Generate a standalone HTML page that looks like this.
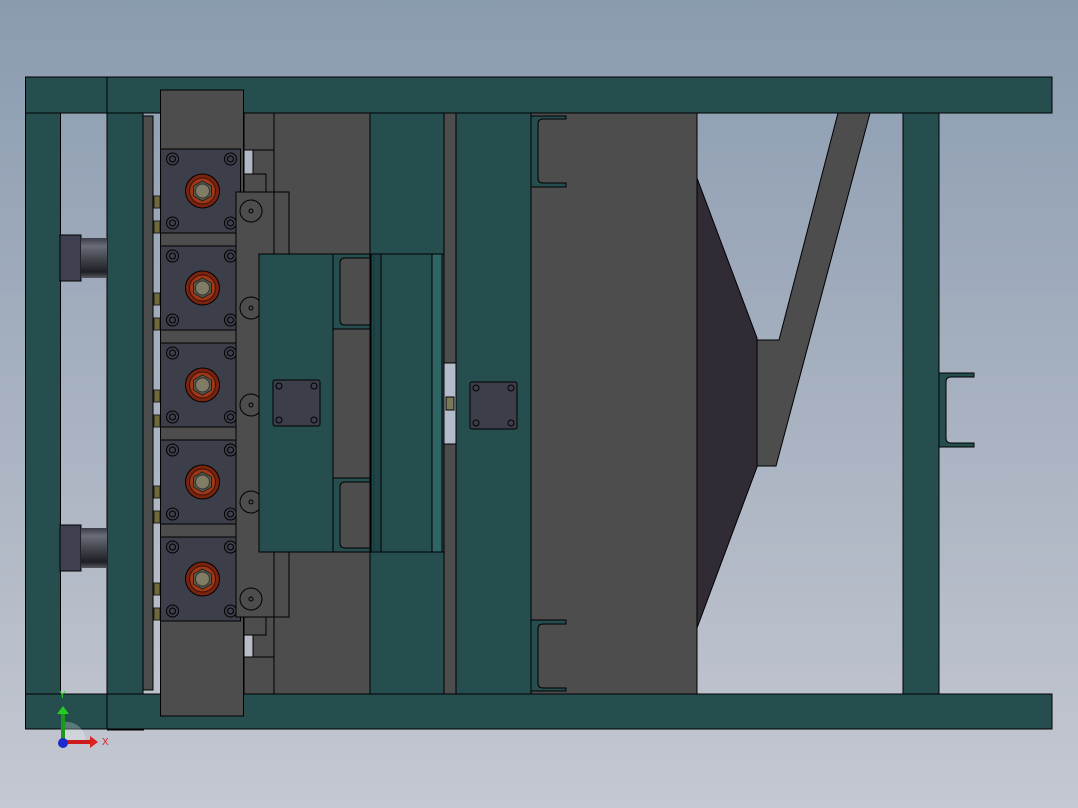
<!DOCTYPE html>
<html><head><meta charset="utf-8"><style>
html,body{margin:0;padding:0;width:1078px;height:808px;overflow:hidden;background:linear-gradient(#8a9bb0,#c4c7d0);}
svg{display:block}
</style></head><body>
<svg width="1078" height="808" viewBox="0 0 1078 808" xmlns="http://www.w3.org/2000/svg">
<defs>
<linearGradient id="bg" x1="0" y1="0" x2="0" y2="1"><stop offset="0" stop-color="#8a9bb0"/><stop offset="1" stop-color="#c5c8d1"/></linearGradient>
<linearGradient id="cyl" x1="0" y1="0" x2="0" y2="1"><stop offset="0" stop-color="#3a3c48"/><stop offset="0.2" stop-color="#6a6c78"/><stop offset="0.5" stop-color="#45474f"/><stop offset="0.85" stop-color="#1e1f25"/><stop offset="1" stop-color="#55575f"/></linearGradient>
<g id="motor">
<rect x="0" y="0" width="80" height="84" fill="#3c3e4a" stroke="#000" stroke-width="1"/>
<circle cx="12" cy="10" r="6" fill="none" stroke="#000"/><circle cx="12" cy="10" r="3" fill="none" stroke="#000"/>
<circle cx="70" cy="10" r="6" fill="none" stroke="#000"/><circle cx="70" cy="10" r="3" fill="none" stroke="#000"/>
<circle cx="12" cy="74" r="6" fill="none" stroke="#000"/><circle cx="12" cy="74" r="3" fill="none" stroke="#000"/>
<circle cx="70" cy="74" r="6" fill="none" stroke="#000"/><circle cx="70" cy="74" r="3" fill="none" stroke="#000"/>
<circle cx="42" cy="42" r="17" fill="#7a2410" stroke="#000"/>
<circle cx="42" cy="42" r="13" fill="#a03818" stroke="#3a1006"/>
<polygon points="42,32 51,37 51,47 42,52 33,47 33,37" fill="#5a5a48" stroke="#222"/>
<circle cx="42" cy="42" r="7" fill="#807c66" stroke="#333"/>
</g>
</defs>
<rect width="1078" height="808" fill="url(#bg)"/>
<g stroke="#000" stroke-width="1">
<!-- posts -->
<rect x="25.5" y="113" width="35" height="581" fill="#264e4f"/>
<rect x="107" y="113" width="36" height="581" fill="#264e4f"/>
<rect x="143" y="116" width="10" height="574" fill="#4d4d4d"/>
<!-- cylinders -->
<rect x="60" y="235" width="21" height="46" fill="#3e4050"/>
<rect x="81" y="238" width="26" height="40" fill="url(#cyl)" stroke="none"/>
<rect x="60" y="525" width="21" height="46" fill="#3e4050"/>
<rect x="81" y="528" width="26" height="40" fill="url(#cyl)" stroke="none"/>
<!-- mid gray -->
<rect x="244" y="113" width="126" height="581" fill="#4d4d4d"/>
<rect x="274" y="113" width="96" height="581" fill="#4d4d4d"/>
<rect x="244" y="113" width="30" height="37" fill="#4d4d4d"/>
<rect x="244" y="150" width="9" height="24" fill="#b0b8c6"/>
<rect x="244" y="174" width="22" height="18" fill="#4d4d4d"/>
<rect x="244" y="617" width="22" height="18" fill="#4d4d4d"/>
<rect x="244" y="635" width="9" height="22" fill="#b8bdc8"/>
<rect x="244" y="657" width="30" height="37" fill="#4d4d4d"/>
<!-- teal columns -->
<rect x="370" y="113" width="74" height="581" fill="#264e4f"/>
<rect x="444" y="113" width="12" height="581" fill="#4d4d4d"/>
<rect x="444" y="363" width="12" height="81" fill="#b4bccb"/>
<rect x="456" y="113" width="75" height="581" fill="#264e4f"/>
<rect x="470" y="382" width="47" height="47" rx="2" fill="#3c3e4a"/>
<circle cx="476" cy="388" r="3" fill="none"/><circle cx="511" cy="388" r="3" fill="none"/><circle cx="476" cy="423" r="3" fill="none"/><circle cx="511" cy="423" r="3" fill="none"/>
<rect x="446" y="397" width="8" height="13" fill="#7a7a5a"/>
<!-- big gray -->
<rect x="531" y="113" width="166" height="581" fill="#4d4d4d"/>
<path d="M531 116 H566 V119 H543 Q538 119 538 124 V178 Q538 183 543 183 H566 V187 H531 Z" fill="#264e4f"/>
<path d="M531 620 H566 V624 H543 Q538 624 538 629 V683 Q538 688 543 688 H566 V691 H531 Z" fill="#264e4f"/>
<!-- right wedge -->
<polygon points="697,178 757,338 757,467 697,628" fill="#312b35"/>
<polygon points="838,113 870,113 776,466 757,466 757,340 779,340" fill="#4d4d4d"/>
<rect x="903" y="113" width="36" height="581" fill="#264e4f"/>
<path d="M939 373 H974 V377 H951 Q946 377 946 382 V438 Q946 443 951 443 H974 V447 H939 Z" fill="#264e4f"/>
<!-- top / bottom bars -->
<rect x="25.5" y="77" width="1026.5" height="36" fill="#264e4f"/>
<line x1="107" y1="77" x2="107" y2="113"/>
<rect x="25.5" y="694" width="1026.5" height="35" fill="#264e4f"/>
<line x1="107" y1="694" x2="107" y2="729"/>
<line x1="107" y1="729.5" x2="144" y2="729.5" stroke-width="2"/>
<!-- motor column -->
<rect x="160.5" y="90" width="83" height="626" fill="#4d4d4d"/>
<g fill="#6e6a3a" stroke="#222">
<rect x="154" y="196" width="6" height="12"/><rect x="154" y="221" width="6" height="12"/>
<rect x="154" y="293" width="6" height="12"/><rect x="154" y="318" width="6" height="12"/>
<rect x="154" y="390" width="6" height="12"/><rect x="154" y="415" width="6" height="12"/>
<rect x="154" y="486" width="6" height="12"/><rect x="154" y="511" width="6" height="12"/>
<rect x="154" y="583" width="6" height="12"/><rect x="154" y="608" width="6" height="12"/>
</g>
<use href="#motor" x="160.5" y="149"/>
<use href="#motor" x="160.5" y="246"/>
<use href="#motor" x="160.5" y="343"/>
<use href="#motor" x="160.5" y="440"/>
<use href="#motor" x="160.5" y="537"/>
<!-- side plate -->
<rect x="236" y="192" width="53" height="425" fill="#4d4d4d"/>
<line x1="274" y1="192" x2="274" y2="617"/>
<g fill="none">
<circle cx="251" cy="211" r="11"/><circle cx="251" cy="211" r="2"/>
<circle cx="251" cy="308" r="11"/><circle cx="251" cy="308" r="2"/>
<circle cx="251" cy="405" r="11"/><circle cx="251" cy="405" r="2"/>
<circle cx="251" cy="502" r="11"/><circle cx="251" cy="502" r="2"/>
<circle cx="251" cy="599" r="11"/><circle cx="251" cy="599" r="2"/>
</g>
<!-- front plate -->
<rect x="259" y="254" width="185" height="298" fill="#264e4f"/>
<rect x="333" y="254" width="37" height="298" fill="#264e4f"/>
<rect x="333" y="329" width="37" height="149" fill="#4d4d4d"/>
<path d="M345 258 H370 V325 H345 Q340 325 340 320 V263 Q340 258 345 258 Z" fill="#4d4d4d"/>
<path d="M345 482 H370 V548 H345 Q340 548 340 543 V487 Q340 482 345 482 Z" fill="#4d4d4d"/>
<rect x="370" y="254" width="74" height="298" fill="#264e4f"/>
<rect x="371" y="254" width="10" height="298" fill="#1f4546"/>
<line x1="374" y1="254" x2="374" y2="552" stroke="#173636"/>
<rect x="432" y="254" width="10" height="298" fill="#2f6464"/>
<rect x="273" y="380" width="47" height="46" rx="2" fill="#3c3e4a"/>
<circle cx="279" cy="386" r="3" fill="none"/><circle cx="314" cy="386" r="3" fill="none"/><circle cx="279" cy="420" r="3" fill="none"/><circle cx="314" cy="420" r="3" fill="none"/>
</g>
<!-- axis triad -->
<path d="M63 742 L63 722 A20 20 0 0 1 86 742 Z" fill="#ffffff" opacity="0.25"/>
<rect x="61" y="712" width="4" height="30" fill="#1a9a1a"/>
<polygon points="57,714 63,706 69,714" fill="#22cc22"/>
<rect x="63" y="740" width="28" height="4" fill="#cc1a1a"/>
<polygon points="90,736 98,742 90,748" fill="#dd2222"/>
<circle cx="63" cy="743" r="5" fill="#1a2acc"/>
<text x="59" y="698" font-family="Liberation Sans, sans-serif" font-size="10" fill="#22dd22">Y</text>
<text x="102" y="745" font-family="Liberation Sans, sans-serif" font-size="10" fill="#dd2222">X</text>
</svg>
</body></html>
